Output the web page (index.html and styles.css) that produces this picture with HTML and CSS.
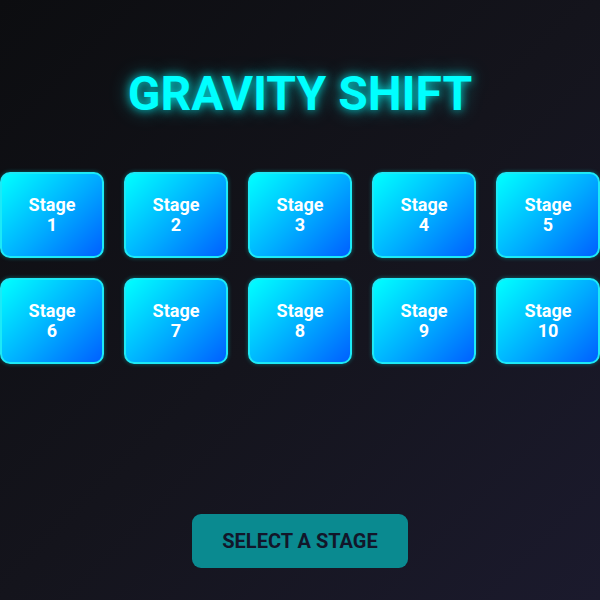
FILE: index.html
```html
<!DOCTYPE html>
<html>
<head>
<meta charset="utf-8">
<link rel="stylesheet" href="styles.css">
</head>
<body>
<main class="screen">
  <h1 class="title">GRAVITY SHIFT</h1>
  <div class="stages">
    <button class="stage">Stage<br>1</button>
    <button class="stage">Stage<br>2</button>
    <button class="stage">Stage<br>3</button>
    <button class="stage">Stage<br>4</button>
    <button class="stage">Stage<br>5</button>
    <button class="stage">Stage<br>6</button>
    <button class="stage">Stage<br>7</button>
    <button class="stage">Stage<br>8</button>
    <button class="stage">Stage<br>9</button>
    <button class="stage">Stage<br>10</button>
  </div>
  <div class="spacer"></div>
  <button class="start">SELECT A STAGE</button>
</main>
</body>
</html>
```
FILE: styles.css
```css
html, body {
  margin: 0;
  padding: 0;
  width: 600px;
  height: 600px;
  overflow: hidden;
}
body {
  background: linear-gradient(135deg, #0c0d10 0%, #14141c 50%, #1b1a2d 100%);
  font-family: Roboto, "Liberation Sans", sans-serif;
}
.screen {
  height: 600px;
  display: flex;
  flex-direction: column;
  align-items: center;
}
.title {
  margin: 66px 0 0;
  font-size: 48px;
  line-height: 56px;
  font-weight: 700;
  color: #00ffff;
  text-shadow: 0 0 10px rgba(0, 255, 255, 0.8), 0 0 20px rgba(0, 255, 255, 0.4);
}
.stages {
  margin-top: 50px;
  width: 600px;
  display: grid;
  grid-template-columns: repeat(5, 104px);
  grid-auto-rows: 86px;
  gap: 20px;
}
.stage {
  box-sizing: border-box;
  border: 2px solid #1de9f6;
  border-radius: 10px;
  background: linear-gradient(135deg, #00ffff 0%, #00aaff 55%, #0060ff 100%);
  color: #ffffff;
  font-family: inherit;
  font-size: 18px;
  font-weight: 700;
  line-height: 20px;
  padding: 0;
  box-shadow: 0 0 4px rgba(0, 255, 255, 0.35);
}
.spacer {
  flex: 1;
}
.start {
  margin-bottom: 32px;
  width: 216px;
  height: 54px;
  border: none;
  border-radius: 9px;
  background: #0a8a90;
  color: #12162a;
  font-family: inherit;
  font-size: 20px;
  font-weight: 700;
  padding: 0;
}
```
